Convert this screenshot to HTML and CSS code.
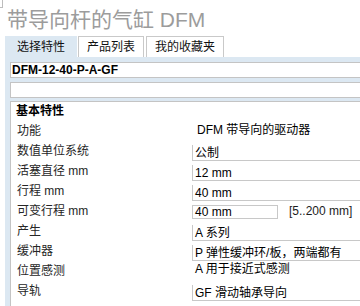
FILE: index.html
```html
<!DOCTYPE html>
<html lang="zh-CN">
<head>
<meta charset="utf-8">
<title>带导向杆的气缸 DFM</title>
<link rel="stylesheet" href="styles.css">
</head>
<body>
<div class="corner"></div>
<h1 class="title">带导向杆的气缸 DFM</h1>
<div class="tabs">
  <div class="tab tab-active">选择特性</div>
  <div class="tab">产品列表</div>
  <div class="tab tab-last">我的收藏夹</div>
</div>
<div class="panel">
  <div class="code-field">DFM-12-40-P-A-GF</div>
  <div class="code-field"></div>
  <div class="props">
    <div class="props-head">基本特性</div>
    <div class="row row-first"><div class="label">功能</div><div class="value value-plain">DFM 带导向的驱动器</div></div>
    <div class="row"><div class="label">数值单位系统</div><div class="value value-field">公制</div></div>
    <div class="row"><div class="label">活塞直径 mm</div><div class="value value-field">12 mm</div></div>
    <div class="row"><div class="label">行程 mm</div><div class="value value-field">40 mm</div></div>
    <div class="row"><div class="label">可变行程 mm</div><div class="value value-range"><div class="range-box">40 mm</div><div class="range-hint">[5..200 mm]</div></div></div>
    <div class="row"><div class="label">产生</div><div class="value value-field">A 系列</div></div>
    <div class="row"><div class="label">缓冲器</div><div class="value value-field">P 弹性缓冲环/板，两端都有</div></div>
    <div class="row"><div class="label">位置感测</div><div class="value value-text">A 用于接近式感测</div></div>
    <div class="row"><div class="label">导轨</div><div class="value value-field">GF 滑动轴承导向</div></div>
  </div>
</div>
</body>
</html>
```

FILE: styles.css
```css
html, body {
  margin: 0;
  padding: 0;
  overflow: hidden;
  background: #ffffff;
}

body {
  position: relative;
  width: 360px;
  height: 306px;
  font-family: "Liberation Sans", Arial, "Noto Sans CJK SC", sans-serif;
  font-size: 12px;
  color: #000;
}

.corner {
  position: absolute;
  left: 0;
  top: 0;
  width: 2px;
  height: 7px;
  border-right: 1px solid #bdbdbd;
  border-bottom: 1px solid #bdbdbd;
}

.title {
  margin: 0;
  padding: 8px 0 0 7px;
  font-size: 21px;
  font-weight: normal;
  line-height: 24px;
  color: #9c9c9c;
  white-space: nowrap;
}

.tabs {
  display: flex;
  margin: 4px 0 0 5px;
  height: 21px;
}

.tab {
  box-sizing: border-box;
  height: 21px;
  margin-left: 1px;
  padding: 0 8px;
  border: 1px solid #c9c9c9;
  border-bottom: none;
  line-height: 20px;
  color: #111;
  white-space: nowrap;
}

.tab-active {
  margin-left: 0;
  padding: 0 11px;
  background: #dce8f2;
  border-color: #dce8f2;
}

.tab-last {
  margin-left: 2px;
}

.panel {
  box-sizing: border-box;
  width: 355px;
  height: 249px;
  margin-left: 5px;
  padding: 5px 0 0 5px;
  background: #dce8f2;
  overflow: hidden;
}

.code-field {
  box-sizing: border-box;
  height: 16px;
  padding-left: 1px;
  border: 1px solid #c4c4c4;
  border-right: none;
  background: #fff;
  line-height: 14px;
  font-weight: bold;
}

.code-field + .code-field {
  margin-top: 4px;
}

.props {
  box-sizing: border-box;
  height: 205px;
  margin-top: 3px;
  background: #fff;
  border-top: 1px solid #c4c4c4;
  border-left: 1px solid #c4c4c4;
}

.props-head {
  height: 19px;
  padding-left: 5px;
  line-height: 19px;
  font-weight: bold;
}

.row {
  display: flex;
  height: 20px;
}

.label {
  flex: none;
  box-sizing: border-box;
  width: 181px;
  padding-left: 6px;
  line-height: 20px;
  color: #262626;
  white-space: nowrap;
}

.value {
  flex: 1;
  min-width: 0;
  white-space: nowrap;
}

.value-plain {
  padding-left: 5px;
  line-height: 19px;
}

.value-field {
  box-sizing: border-box;
  height: 16px;
  margin-top: 4px;
  padding: 1px 0 0 2px;
  border-left: 1px solid #c8c8c8;
  border-bottom: 1px solid #c8c8c8;
  line-height: 14px;
}

.value-range {
  display: flex;
  align-items: flex-start;
}

.range-box {
  box-sizing: border-box;
  width: 86px;
  height: 14px;
  margin-top: 4px;
  padding-left: 2px;
  border: 1px solid #c8c8c8;
  line-height: 13px;
}

.range-hint {
  margin: 3px 0 0 11px;
  line-height: 14px;
  color: #1c1c1c;
}

.value-text {
  padding-left: 3px;
  line-height: 16px;
}
```
